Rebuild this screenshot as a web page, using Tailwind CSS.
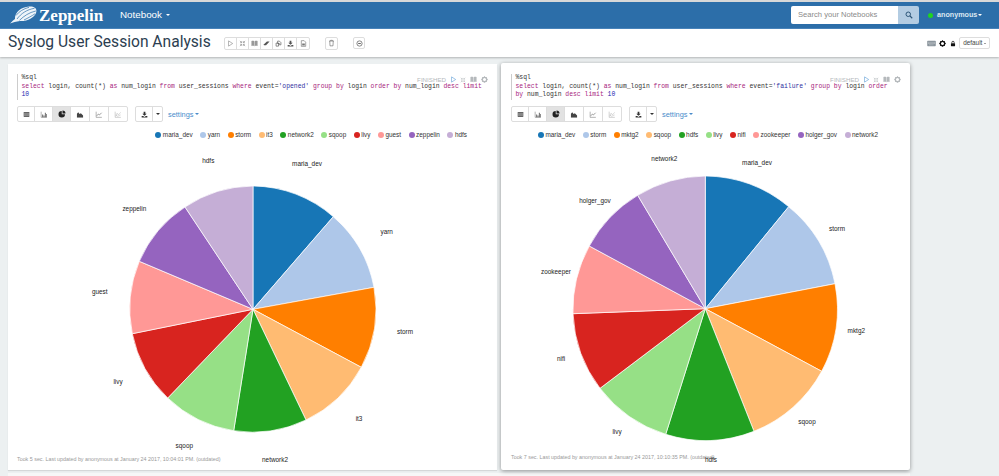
<!DOCTYPE html>
<html lang="en">
<head>
<meta charset="utf-8">
<title>Syslog User Session Analysis</title>
<script src="https://cdn.jsdelivr.net/npm/@tailwindcss/browser@4"></script>
</head>
<body class="w-[999px] h-[476px] overflow-hidden bg-[#ecf0f1] font-['Liberation_Sans',Arial,sans-serif]">
<svg class="hidden">
  <symbol id="play" viewBox="0 0 16 16"><path d="M3.500 2 L13 8 L3.500 14 Z" fill="none" stroke="currentColor" stroke-width="1.400"/></symbol>
  <symbol id="expand" viewBox="0 0 16 16"><path d="M2 2l4 4M6 2.500V6H2.500M14 2l-4 4M10 2.500V6h3.500M2 14l4-4M6 13.500V10H2.500M14 14l-4-4M10 13.500V10h3.500" fill="none" stroke="currentColor" stroke-width="1.400"/></symbol>
  <symbol id="book" viewBox="0 0 16 16"><path d="M1 2.500c2.500-.8 5-.8 6.500.5v11c-1.500-1.200-4-1.200-6.500-.5zM15 2.500c-2.500-.8-5-.8-6.500.5v11c1.500-1.200 4-1.200 6.500-.5z" fill="currentColor"/></symbol>
  <symbol id="eraser" viewBox="0 0 16 16"><path d="M1 11 L9 3.500 h6 L7 12 H2.500z" fill="currentColor"/></symbol>
  <symbol id="copy" viewBox="0 0 16 16"><path d="M6 2.500h4l3.500 3.500v5H10V8H6zM2.500 7H8v7H2.500z" fill="none" stroke="currentColor" stroke-width="1.500"/></symbol>
  <symbol id="download" viewBox="0 0 16 16"><path d="M6 1.500h4V6h3L8 11 3 6h3zM1.500 11.500h3.500L8 13.500l3-2h3.500V15h-13z" fill="currentColor"/></symbol>
  <symbol id="file" viewBox="0 0 16 16"><path d="M3 1.500h6.500L13 5v9.500H3z" fill="none" stroke="currentColor" stroke-width="1.500"/><path d="M5 8h6v4.500H5z" fill="currentColor"/></symbol>
  <symbol id="trash" viewBox="0 0 16 16"><path d="M2.500 3.500h11M6 3.500V1.800h4v1.700M4 3.500l.6 11h6.800l.6-11" fill="none" stroke="currentColor" stroke-width="1.400"/></symbol>
  <symbol id="gear" viewBox="0 0 16 16"><circle cx="8" cy="8" r="5" fill="none" stroke="currentColor" stroke-width="3"/><path d="M8 .5v3M8 12.500v3M.5 8h3M12.500 8h3M2.700 2.700l2.100 2.100M11.200 11.200l2.100 2.100M13.300 2.700l-2.100 2.100M4.800 11.200l-2.100 2.100" stroke="currentColor" stroke-width="2"/></symbol>
  <symbol id="cog2" viewBox="0 0 16 16"><circle cx="8" cy="8" r="6" fill="none" stroke="currentColor" stroke-width="1.800"/><rect x="5" y="6.800" width="6" height="2.400" fill="currentColor"/></symbol>
  <symbol id="table" viewBox="0 0 16 16"><rect x="1.500" y="2.500" width="13" height="11" rx="1" fill="currentColor"/><path d="M2 6.500h12M2 9.500h12" stroke="#fff" stroke-width=".8"/></symbol>
  <symbol id="bars" viewBox="0 0 16 16"><path d="M1.500 1.500v13h13" fill="none" stroke="currentColor" stroke-width="1"/><path d="M4 8h2v6H4zM7 10h2v4H7zM10 4h2v10h-2zM13 7h1.500v7H13z" fill="currentColor"/></symbol>
  <symbol id="pie" viewBox="0 0 16 16"><path d="M7.500 2a6.500 6.500 0 1 0 6.500 6.500H7.500z" fill="currentColor"/><path d="M9 .8a6 6 0 0 1 6 6H9z" fill="currentColor"/></symbol>
  <symbol id="area" viewBox="0 0 16 16"><path d="M1 14V6l3-3 3 4 3-2 5 5v4z" fill="currentColor"/><path d="M1 15h14" stroke="currentColor"/></symbol>
  <symbol id="line" viewBox="0 0 16 16"><path d="M1.500 1.500v13h13" fill="none" stroke="currentColor"/><path d="M3 11l3.500-4 2.500 2 5-5" fill="none" stroke="currentColor" stroke-width="1.300"/></symbol>
  <symbol id="line2" viewBox="0 0 16 16"><path d="M1.500 1.500v13h13" fill="none" stroke="currentColor"/><path d="M3 12l3-7 3 4 5-6M3 9l4 3 7-3" fill="none" stroke="currentColor" stroke-width=".8"/></symbol>
  <symbol id="search" viewBox="0 0 16 16"><circle cx="6.500" cy="6.500" r="4.500" fill="none" stroke="currentColor" stroke-width="2"/><path d="M10 10l4.500 4.500" stroke="currentColor" stroke-width="2.200"/></symbol>
  <symbol id="keyboard" viewBox="0 0 20 14"><rect x=".5" y="1" width="19" height="12" rx="1.500" fill="currentColor"/><path d="M3 4.500h14M3 7h14M5 10h10" stroke="#fff" stroke-width="1" stroke-dasharray="1.500 1"/></symbol>
  <symbol id="lock" viewBox="0 0 16 16"><path d="M5 7V5a3 3 0 0 1 6 0v2" fill="none" stroke="currentColor" stroke-width="2"/><rect x="2.500" y="7" width="11" height="8" rx="1" fill="currentColor"/></symbol>
</svg>

<div class="h-[2px] bg-[#d8d8d8]"></div>
<nav class="h-[27px] bg-[#2c6ea9] border-b border-[#4a86bd] flex items-center text-white">
  <svg class="ml-[9px] w-[28px] h-[18px]" viewBox="0 0 28 18" aria-hidden="true">
    <path d="M1 17.500 C3 15.500 4 14.500 6 13 C5.500 7 12 1 20 .6 C26 .2 28.500 3 27 7 C25 12 18 15.500 11 15 C7 15.300 4 16.800 1 17.500 Z" fill="#eef4f9"/>
    <path d="M8 13 C12 7.500 18 3.500 25.500 2.300 M10.500 14.300 C15 10 20 6.500 26.800 5 M7 9.500 C10 5.500 14.500 2.800 20 1.300 M15 14 C19 12 23 9.800 26 7.800" fill="none" stroke="#2c6ea9" stroke-width=".7"/>
  </svg>
  <span class="ml-[2px] w-[71px] font-['Liberation_Serif',serif] font-bold text-[17px] leading-none">Zeppelin</span>
  <span class="ml-[10px] text-[9.800px]">Notebook</span>
  <span class="ml-[4px] border-x-[2px] border-t-[2px] border-x-transparent border-t-white"></span>
  <div class="ml-auto flex h-[18px] rounded-[2px] overflow-hidden">
    <span class="w-[107px] bg-white text-[#8a8a8a] text-[7.600px] leading-[18px] pl-[7px]">Search your Notebooks</span>
    <span class="w-[21px] bg-[#b3cce2] text-[#2c5577] flex items-center justify-center"><svg class="w-[8px] h-[8px]"><use href="#search"/></svg></span>
  </div>
  <span class="ml-[9px] w-[5px] h-[5px] rounded-full bg-[#1fd41f]"></span>
  <span class="ml-[4px] w-[39px] text-[7.200px] font-bold text-[#dbe7f2] whitespace-nowrap">anonymous</span>
  <span class="ml-[2px] mr-[17px] border-x-[2px] border-t-[2px] border-x-transparent border-t-white"></span>
</nav>

<header class="h-[28px] bg-white shadow-[0_1px_2px_rgba(0,0,0,0.25)] flex items-center relative">
  <h1 class="ml-[8px] w-[216px] font-['Roboto',sans-serif] text-[15.600px] leading-none text-[#2c3e50] whitespace-nowrap">Syslog User Session Analysis</h1>
  <div class="flex h-[13px] border border-[#ddd] rounded-[2px] text-[#555] divide-x divide-[#ddd]">
    <span class="w-[12px] flex items-center justify-center text-[#888]"><svg class="w-[7px] h-[7px]"><use href="#play"/></svg></span>
    <span class="w-[12px] flex items-center justify-center text-[#888]"><svg class="w-[7px] h-[7px]"><use href="#expand"/></svg></span>
    <span class="w-[12px] flex items-center justify-center text-[#999]"><svg class="w-[7px] h-[7px]"><use href="#book"/></svg></span>
    <span class="w-[12px] flex items-center justify-center"><svg class="w-[7px] h-[7px]"><use href="#eraser"/></svg></span>
    <span class="w-[12px] flex items-center justify-center"><svg class="w-[7px] h-[7px]"><use href="#copy"/></svg></span>
    <span class="w-[12px] flex items-center justify-center"><svg class="w-[7px] h-[7px]"><use href="#download"/></svg></span>
    <span class="w-[12px] flex items-center justify-center text-[#777]"><svg class="w-[7px] h-[7px]"><use href="#file"/></svg></span>
  </div>
  <span class="ml-[15px] w-[13px] h-[13px] border border-[#ddd] rounded-[2px] flex items-center justify-center text-[#666]"><svg class="w-[7px] h-[8px]"><use href="#trash"/></svg></span>
  <span class="ml-[15px] w-[12px] h-[12px] border border-[#ddd] rounded-[2px] flex items-center justify-center text-[#666]"><svg class="w-[7px] h-[7px]"><use href="#cog2"/></svg></span>
  <div class="ml-auto mr-[9px] flex items-center">
    <svg class="w-[9px] h-[7px] text-[#8a949c]"><use href="#keyboard"/></svg>
    <svg class="ml-[3px] w-[7px] h-[7px] text-[#111]"><use href="#gear"/></svg>
    <svg class="ml-[4px] w-[6px] h-[7px] text-[#111]"><use href="#lock"/></svg>
    <span class="ml-[3px] w-[31px] h-[12px] border border-[#ddd] rounded-[2px] text-[6.400px] leading-[10px] text-[#444] flex items-center justify-center gap-[1.500px]">default<span class="border-x-[1.500px] border-t-[1.500px] border-x-transparent border-t-[#444]"></span></span>
  </div>
</header>

<main class="flex gap-[4px] pl-[8px] pt-[6px] items-start">
  <!-- left paragraph -->
  <section class="relative w-[489px] h-[406px] mt-[1px] bg-white flex flex-col shadow-[0_1px_1px_rgba(0,0,0,0.1)]">
    <svg class="absolute inset-0 w-[489px] h-[406px]" viewBox="8 64 489 406" font-family="Liberation Sans, Arial, sans-serif" font-size="6.400" fill="#222" text-anchor="middle">
      <g stroke="#fff" stroke-width=".7">
        <path fill="#1776b6" d="M253 309.300L253 186A123.300 123.300 0 0 1 333.300 216.700Z"/>
        <path fill="#aec7e9" d="M253 309.300L333.300 216.700A123.300 123.300 0 0 1 374 287.300Z"/>
        <path fill="#ff7f00" d="M253 309.300L374 287.300A123.300 123.300 0 0 1 361.300 367.300Z"/>
        <path fill="#ffbb72" d="M253 309.300L361.300 367.300A123.300 123.300 0 0 1 306 420Z"/>
        <path fill="#22a122" d="M253 309.300L306 420A123.300 123.300 0 0 1 233.700 430.700Z"/>
        <path fill="#96e086" d="M253 309.300L233.700 430.700A123.300 123.300 0 0 1 167.700 398Z"/>
        <path fill="#d8241f" d="M253 309.300L167.700 398A123.300 123.300 0 0 1 132.300 333.700Z"/>
        <path fill="#ff9896" d="M253 309.300L132.300 333.700A123.300 123.300 0 0 1 139.300 261.300Z"/>
        <path fill="#9564bf" d="M253 309.300L139.300 261.300A123.300 123.300 0 0 1 185 207Z"/>
        <path fill="#c5aed6" d="M253 309.300L185 207A123.300 123.300 0 0 1 253 186Z"/>
      </g>
      <text x="307" y="166">maria_dev</text><text x="386.700" y="234">yarn</text><text x="405" y="334">storm</text><text x="359" y="420.500">it3</text><text x="275" y="461.500">network2</text><text x="184.300" y="447.500">sqoop</text><text x="118" y="384">livy</text><text x="99.700" y="294">guest</text><text x="134.300" y="211">zeppelin</text><text x="208.300" y="162.500">hdfs</text>
    </svg>
    <div class="absolute top-[11px] right-[9px] flex items-center text-[#b5b9bc]">
      <span class="text-[6.200px] mr-[4px]">FINISHED</span>
      <svg class="w-[7px] h-[7px] text-[#5f9fd8]"><use href="#play"/></svg>
      <svg class="ml-[3px] w-[6px] h-[6px]"><use href="#expand"/></svg>
      <svg class="ml-[4px] w-[7px] h-[7px]"><use href="#book"/></svg>
      <svg class="ml-[4px] w-[7px] h-[7px]"><use href="#gear"/></svg>
    </div>
    <div class="relative ml-[9px] mt-[10px] pl-[3.500px] border-l border-[#ccc] font-['Liberation_Mono',monospace] text-[6.400px] leading-[8.700px] text-[#333] whitespace-pre"><div>%sql</div><div><span class="text-[#a71d7d]">select</span> login, count(*) <span class="text-[#a71d7d]">as</span> num_login <span class="text-[#a71d7d]">from</span> user_sessions <span class="text-[#a71d7d]">where</span> event=<span class="text-[#2f2fa0]">'opened'</span> <span class="text-[#a71d7d]">group by</span> login <span class="text-[#a71d7d]">order by</span> num_login <span class="text-[#a71d7d]">desc</span> <span class="text-[#a71d7d]">limit</span></div><div class="text-[#2020b0]">10</div></div>
    <div class="relative ml-[9px] mt-[6px] flex items-center">
      <div class="flex h-[16px] border border-[#ddd] rounded-[2px] text-[#555] divide-x divide-[#ddd]">
        <span class="w-[17px] flex items-center justify-center text-[#666]"><svg class="w-[7px] h-[7px]"><use href="#table"/></svg></span>
        <span class="w-[18px] flex items-center justify-center"><svg class="w-[8px] h-[7px]"><use href="#bars"/></svg></span>
        <span class="w-[18px] flex items-center justify-center bg-[#e2e2e2] text-[#222]"><svg class="w-[8px] h-[8px]"><use href="#pie"/></svg></span>
        <span class="w-[19px] flex items-center justify-center text-[#444]"><svg class="w-[8px] h-[7px]"><use href="#area"/></svg></span>
        <span class="w-[19px] flex items-center justify-center"><svg class="w-[8px] h-[7px]"><use href="#line"/></svg></span>
        <span class="w-[18px] flex items-center justify-center text-[#999]"><svg class="w-[8px] h-[7px]"><use href="#line2"/></svg></span>
      </div>
      <div class="ml-[7px] flex h-[16px] border border-[#ddd] rounded-[2px] divide-x divide-[#ddd] text-[#333]">
        <span class="w-[17px] flex items-center justify-center"><svg class="w-[7px] h-[7px]"><use href="#download"/></svg></span>
        <span class="w-[9px] flex items-center justify-center"><span class="border-x-[2px] border-t-[2px] border-x-transparent border-t-[#333]"></span></span>
      </div>
      <span class="ml-[5px] text-[7.400px] text-[#4a8ccb]">settings</span>
      <span class="ml-[2px] border-x-[2px] border-t-[2px] border-x-transparent border-t-[#4a8ccb]"></span>
    </div>
    <div class="relative mt-[9px] pr-[30px] flex justify-end gap-[7.500px] text-[6.400px] leading-[8px] text-[#333]">
      <span class="flex items-center gap-[1.500px]"><i class="w-[6px] h-[6px] rounded-full bg-[#1776b6]"></i>maria_dev</span>
      <span class="flex items-center gap-[1.500px]"><i class="w-[6px] h-[6px] rounded-full bg-[#aec7e9]"></i>yarn</span>
      <span class="flex items-center gap-[1.500px]"><i class="w-[6px] h-[6px] rounded-full bg-[#ff7f00]"></i>storm</span>
      <span class="flex items-center gap-[1.500px]"><i class="w-[6px] h-[6px] rounded-full bg-[#ffbb72]"></i>it3</span>
      <span class="flex items-center gap-[1.500px]"><i class="w-[6px] h-[6px] rounded-full bg-[#22a122]"></i>network2</span>
      <span class="flex items-center gap-[1.500px]"><i class="w-[6px] h-[6px] rounded-full bg-[#96e086]"></i>sqoop</span>
      <span class="flex items-center gap-[1.500px]"><i class="w-[6px] h-[6px] rounded-full bg-[#d8241f]"></i>livy</span>
      <span class="flex items-center gap-[1.500px]"><i class="w-[6px] h-[6px] rounded-full bg-[#ff9896]"></i>guest</span>
      <span class="flex items-center gap-[1.500px]"><i class="w-[6px] h-[6px] rounded-full bg-[#9564bf]"></i>zeppelin</span>
      <span class="flex items-center gap-[1.500px]"><i class="w-[6px] h-[6px] rounded-full bg-[#c5aed6]"></i>hdfs</span>
    </div>
    <div class="mt-auto mb-[7px] ml-[9px] relative text-[5.350px] leading-[8px] text-[#999]">Took 5 sec. Last updated by anonymous at January 24 2017, 10:04:01 PM. (outdated)</div>
  </section>

  <!-- right paragraph -->
  <section class="relative w-[409px] h-[407px] bg-white rounded-[2px] flex flex-col shadow-[0_1px_4px_rgba(0,0,0,0.4)]">
    <svg class="absolute inset-0 w-[409px] h-[407px]" viewBox="501 63 409 407" font-family="Liberation Sans, Arial, sans-serif" font-size="6.400" fill="#222" text-anchor="middle">
      <g stroke="#fff" stroke-width=".7">
        <path fill="#1776b6" d="M705.300 308.700L705.300 176A132.700 132.700 0 0 1 788.700 206.700Z"/>
        <path fill="#aec7e9" d="M705.300 308.700L788.700 206.700A132.700 132.700 0 0 1 835 283.700Z"/>
        <path fill="#ff7f00" d="M705.300 308.700L835 283.700A132.700 132.700 0 0 1 821.700 371.300Z"/>
        <path fill="#ffbb72" d="M705.300 308.700L821.700 371.300A132.700 132.700 0 0 1 754 431.300Z"/>
        <path fill="#22a122" d="M705.300 308.700L754 431.300A132.700 132.700 0 0 1 665.700 434.300Z"/>
        <path fill="#96e086" d="M705.300 308.700L665.700 434.300A132.700 132.700 0 0 1 600 388.300Z"/>
        <path fill="#d8241f" d="M705.300 308.700L600 388.300A132.700 132.700 0 0 1 573 313.700Z"/>
        <path fill="#ff9896" d="M705.300 308.700L573 313.700A132.700 132.700 0 0 1 589.300 246Z"/>
        <path fill="#9564bf" d="M705.300 308.700L589.300 246A132.700 132.700 0 0 1 637.700 195.300Z"/>
        <path fill="#c5aed6" d="M705.300 308.700L637.700 195.300A132.700 132.700 0 0 1 705.300 176Z"/>
      </g>
      <text x="757" y="164.800">maria_dev</text><text x="837" y="230.800">storm</text><text x="856.300" y="332.800">mktg2</text><text x="807" y="423.500">sqoop</text><text x="711" y="461.800">hdfs</text><text x="617" y="434.200">livy</text><text x="561" y="360.500">nifi</text><text x="556" y="274.200">zookeeper</text><text x="595" y="202.500">holger_gov</text><text x="664.300" y="161.200">network2</text>
    </svg>
    <div class="absolute top-[12px] right-[9px] flex items-center text-[#b5b9bc]">
      <span class="text-[6.200px] mr-[4px]">FINISHED</span>
      <svg class="w-[7px] h-[7px] text-[#5f9fd8]"><use href="#play"/></svg>
      <svg class="ml-[3px] w-[6px] h-[6px]"><use href="#expand"/></svg>
      <svg class="ml-[4px] w-[7px] h-[7px]"><use href="#book"/></svg>
      <svg class="ml-[4px] w-[7px] h-[7px]"><use href="#gear"/></svg>
    </div>
    <div class="relative ml-[10px] mt-[11px] pl-[3.500px] border-l border-[#ccc] font-['Liberation_Mono',monospace] text-[6.400px] leading-[8.700px] text-[#333] whitespace-pre"><div>%sql</div><div><span class="text-[#a71d7d]">select</span> login, count(*) <span class="text-[#a71d7d]">as</span> num_login <span class="text-[#a71d7d]">from</span> user_sessions <span class="text-[#a71d7d]">where</span> event=<span class="text-[#2f2fa0]">'failure'</span> <span class="text-[#a71d7d]">group by</span> login <span class="text-[#a71d7d]">order</span></div><div><span class="text-[#a71d7d]">by</span> num_login <span class="text-[#a71d7d]">desc</span> <span class="text-[#a71d7d]">limit</span> <span class="text-[#2020b0]">10</span></div></div>
    <div class="relative ml-[10px] mt-[6px] flex items-center">
      <div class="flex h-[16px] border border-[#ddd] rounded-[2px] text-[#555] divide-x divide-[#ddd]">
        <span class="w-[17px] flex items-center justify-center text-[#666]"><svg class="w-[7px] h-[7px]"><use href="#table"/></svg></span>
        <span class="w-[18px] flex items-center justify-center"><svg class="w-[8px] h-[7px]"><use href="#bars"/></svg></span>
        <span class="w-[18px] flex items-center justify-center bg-[#e2e2e2] text-[#222]"><svg class="w-[8px] h-[8px]"><use href="#pie"/></svg></span>
        <span class="w-[19px] flex items-center justify-center text-[#444]"><svg class="w-[8px] h-[7px]"><use href="#area"/></svg></span>
        <span class="w-[19px] flex items-center justify-center"><svg class="w-[8px] h-[7px]"><use href="#line"/></svg></span>
        <span class="w-[18px] flex items-center justify-center text-[#999]"><svg class="w-[8px] h-[7px]"><use href="#line2"/></svg></span>
      </div>
      <div class="ml-[7px] flex h-[16px] border border-[#ddd] rounded-[2px] divide-x divide-[#ddd] text-[#333]">
        <span class="w-[17px] flex items-center justify-center"><svg class="w-[7px] h-[7px]"><use href="#download"/></svg></span>
        <span class="w-[9px] flex items-center justify-center"><span class="border-x-[2px] border-t-[2px] border-x-transparent border-t-[#333]"></span></span>
      </div>
      <span class="ml-[5px] text-[7.400px] text-[#4a8ccb]">settings</span>
      <span class="ml-[2px] border-x-[2px] border-t-[2px] border-x-transparent border-t-[#4a8ccb]"></span>
    </div>
    <div class="relative mt-[9px] pr-[32px] flex justify-end gap-[7.500px] text-[6.400px] leading-[8px] text-[#333]">
      <span class="flex items-center gap-[1.500px]"><i class="w-[6px] h-[6px] rounded-full bg-[#1776b6]"></i>maria_dev</span>
      <span class="flex items-center gap-[1.500px]"><i class="w-[6px] h-[6px] rounded-full bg-[#aec7e9]"></i>storm</span>
      <span class="flex items-center gap-[1.500px]"><i class="w-[6px] h-[6px] rounded-full bg-[#ff7f00]"></i>mktg2</span>
      <span class="flex items-center gap-[1.500px]"><i class="w-[6px] h-[6px] rounded-full bg-[#ffbb72]"></i>sqoop</span>
      <span class="flex items-center gap-[1.500px]"><i class="w-[6px] h-[6px] rounded-full bg-[#22a122]"></i>hdfs</span>
      <span class="flex items-center gap-[1.500px]"><i class="w-[6px] h-[6px] rounded-full bg-[#96e086]"></i>livy</span>
      <span class="flex items-center gap-[1.500px]"><i class="w-[6px] h-[6px] rounded-full bg-[#d8241f]"></i>nifi</span>
      <span class="flex items-center gap-[1.500px]"><i class="w-[6px] h-[6px] rounded-full bg-[#ff9896]"></i>zookeeper</span>
      <span class="flex items-center gap-[1.500px]"><i class="w-[6px] h-[6px] rounded-full bg-[#9564bf]"></i>holger_gov</span>
      <span class="flex items-center gap-[1.500px]"><i class="w-[6px] h-[6px] rounded-full bg-[#c5aed6]"></i>network2</span>
    </div>
    <div class="mt-auto mb-[9px] ml-[10px] text-[5.350px] leading-[8px] text-[#999]">Took 7 sec. Last updated by anonymous at January 24 2017, 10:10:35 PM. (outdated)</div>
  </section>
</main>
<div class="mt-[3px] ml-[8px] w-[902px] h-[10px] bg-[#f6f7f7]"></div>
</body>
</html>
